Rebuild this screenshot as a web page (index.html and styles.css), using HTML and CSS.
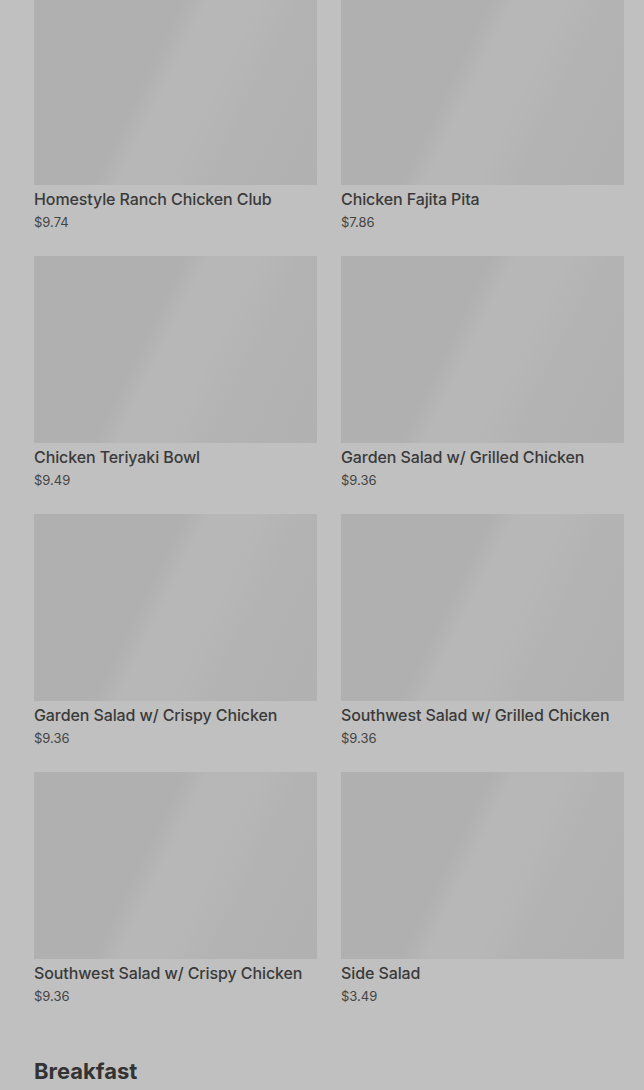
FILE: index.html
```html
<!DOCTYPE html>
<html>
<head>
<meta charset="utf-8">
<link rel="stylesheet" href="styles.css">
</head>
<body>
<div class="page">
  <div class="grid">
    <div class="card"><div class="img"></div><div class="name">Homestyle Ranch Chicken Club</div><div class="price">$9.74</div></div>
    <div class="card"><div class="img"></div><div class="name">Chicken Fajita Pita</div><div class="price">$7.86</div></div>
    <div class="card"><div class="img"></div><div class="name">Chicken Teriyaki Bowl</div><div class="price">$9.49</div></div>
    <div class="card"><div class="img"></div><div class="name">Garden Salad w/ Grilled Chicken</div><div class="price">$9.36</div></div>
    <div class="card"><div class="img"></div><div class="name">Garden Salad w/ Crispy Chicken</div><div class="price">$9.36</div></div>
    <div class="card"><div class="img"></div><div class="name">Southwest Salad w/ Grilled Chicken</div><div class="price">$9.36</div></div>
    <div class="card"><div class="img"></div><div class="name">Southwest Salad w/ Crispy Chicken</div><div class="price">$9.36</div></div>
    <div class="card"><div class="img"></div><div class="name">Side Salad</div><div class="price">$3.49</div></div>
  </div>
  <h2 class="section">Breakfast</h2>
</div>
</body>
</html>
```
FILE: styles.css
```css
html, body {
  margin: 0;
  padding: 0;
  background: #c0c0c0;
  overflow: hidden;
}
.page {
  padding: 0 20px 0 34px;
  font-family: Inter, "Liberation Sans", sans-serif;
  color: #3a3a3a;
}
.grid {
  margin-top: -2px;
  display: grid;
  grid-template-columns: 283px 283px;
  column-gap: 24px;
  row-gap: 0;
}
.card {
  height: 258px;
  display: flex;
  flex-direction: column;
}
.img {
  height: 187px;
  background: linear-gradient(116deg, #b0b0b0 0%, #b0b0b0 40%, #b7b7b7 47%, #b7b7b7 60%, #b3b3b3 72%, #b1b1b1 100%);
}
.name {
  margin-top: 3px;
  font-size: 16px;
  line-height: 22px;
  font-weight: 500;
  letter-spacing: -0.1px;
}
.price {
  margin-top: 3px;
  font-size: 13px;
  line-height: 18px;
  font-weight: 400;
  color: #444;
}
.section {
  margin: 26px 0 0 0;
  font-size: 22px;
  line-height: 30px;
  font-weight: 700;
  color: #333;
}
```
